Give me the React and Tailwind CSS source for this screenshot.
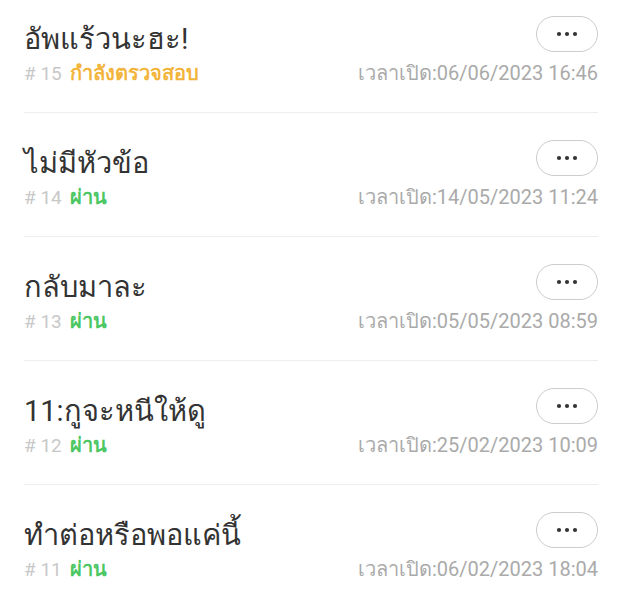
const tickets = [
  { id: 15, title: 'อัพแร้วนะฮะ!', status: 'กำลังตรวจสอบ', pending: true, opened: '06/06/2023 16:46' },
  { id: 14, title: 'ไม่มีหัวข้อ', status: 'ผ่าน', opened: '14/05/2023 11:24' },
  { id: 13, title: 'กลับมาละ', status: 'ผ่าน', opened: '05/05/2023 08:59' },
  { id: 12, title: '11:กูจะหนีให้ดู', status: 'ผ่าน', opened: '25/02/2023 10:09' },
  { id: 11, title: 'ทำต่อหรือพอแค่นี้', status: 'ผ่าน', opened: '06/02/2023 18:04' },
]

function Dots() {
  return (
    <svg width="22" height="6" viewBox="0 0 22 6" fill="#333">
      <circle cx="3" cy="3" r="2.1" />
      <circle cx="11" cy="3" r="2.1" />
      <circle cx="19" cy="3" r="2.1" />
    </svg>
  )
}

function TicketRow({ ticket, first }) {
  return (
    <div
      className={
        'border-b border-[#eeeeee] ' +
        (first ? 'h-[113px] pt-[16px]' : 'h-[124px] pt-[27px]')
      }
    >
      <div className="flex items-start justify-between">
        <div className="mt-[6px] text-[29px] leading-[34px] text-[#333]">{ticket.title}</div>
        <button
          type="button"
          className="w-[62px] h-[36px] rounded-full border-[1.5px] border-[#cccccc] flex items-center justify-center"
        >
          <Dots />
        </button>
      </div>
      <div className="flex items-baseline justify-between mt-[5px]">
        <div className="flex items-baseline leading-[24px]">
          <span className="text-[19px] text-[#c8c8c8]"># {ticket.id}</span>
          <span
            className={
              'ml-[8px] text-[20px] font-semibold ' +
              (ticket.pending ? 'text-[#f2b43a]' : 'text-[#4cc764]')
            }
          >
            {ticket.status}
          </span>
        </div>
        <div className="text-[20px] leading-[24px] text-[#aaaaaa]">
          เวลาเปิด:{ticket.opened}
        </div>
      </div>
    </div>
  )
}

export default function App() {
  return (
    <div
      className="w-[622px] h-[600px] bg-white px-6 overflow-hidden"
      style={{ fontFamily: 'Roboto, "Noto Sans", sans-serif' }}
    >
      {tickets.map((t, i) => (
        <TicketRow key={t.id} ticket={t} first={i === 0} />
      ))}
    </div>
  )
}
